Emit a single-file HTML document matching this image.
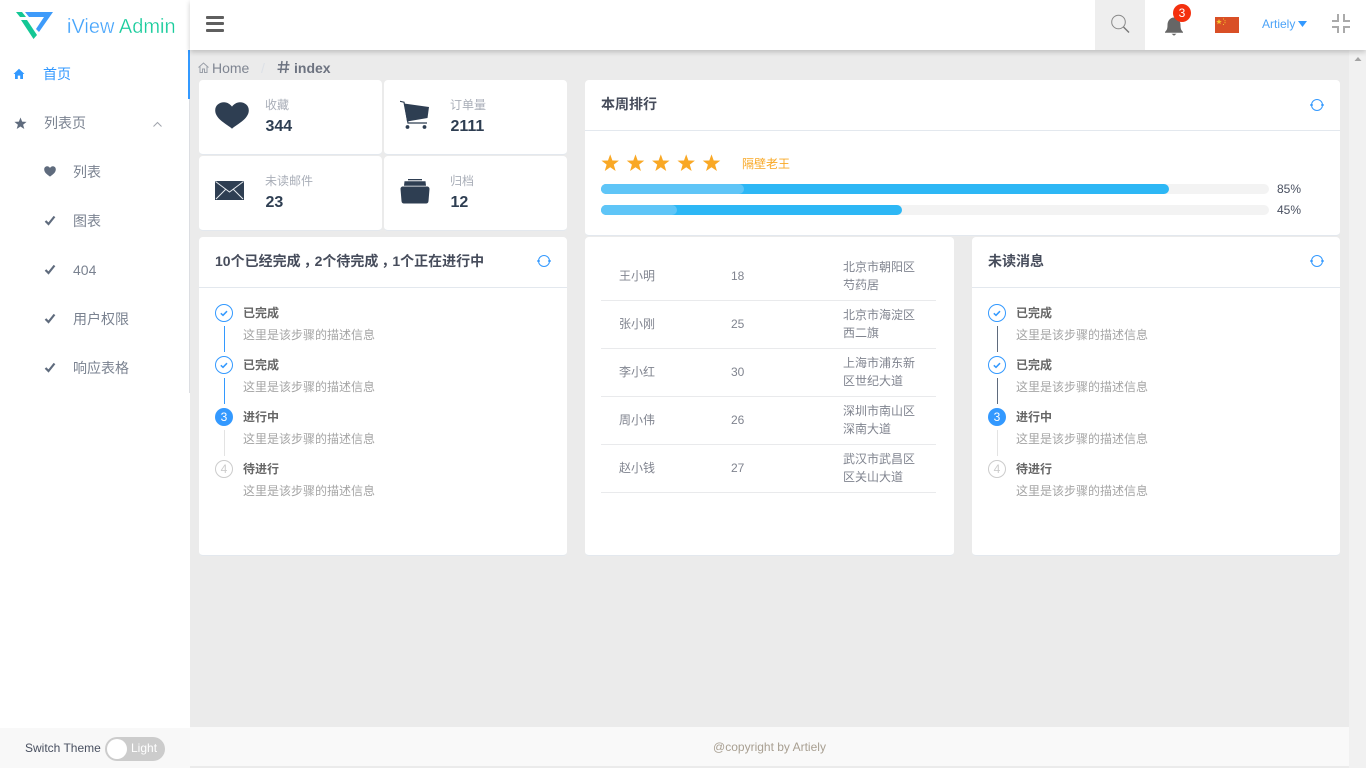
<!DOCTYPE html>
<html><head><meta charset="utf-8">
<style>
*{box-sizing:border-box}
html,body{margin:0;padding:0;width:1366px;height:768px;overflow:hidden;background:#ebebeb;font-family:"Liberation Sans","Noto Sans CJK SC",sans-serif;color:#495060;font-size:12px}
.a{position:absolute}
.t{position:absolute;white-space:nowrap;line-height:18px}
.card{position:absolute;background:#fff;border-radius:4px;border:1px solid #e3e8ee;border-width:0 0 1px 0}
.hr{position:absolute;height:1px;background:#e9eaec}
svg{position:absolute;display:block}
.menu{font-size:14px;color:#7a8290}
.lbl{font-size:12px;color:#a9aeb8}
.num{font-size:16px;font-weight:bold;color:#2e3e52}
.title{font-size:14px;font-weight:bold;color:#464c5b}
.title span{position:relative;left:3px}
.st{font-size:12px;font-weight:bold;color:#666}
.sd{font-size:12px;color:#a5a5a5}
.td{font-size:12px;color:#80848f}
.ad{line-height:18px;white-space:normal;width:80px}
</style></head><body>

<!-- scrollbar -->
<div class="a" style="left:1349px;top:50px;width:17px;height:718px;background:#f1f1f1"></div>
<svg style="left:1354px;top:56px" width="8" height="6"><path d="M4 1 L7.500 5 H.5Z" fill="#a3a3a3"/></svg>

<!-- sidebar -->
<div class="a" style="left:0;top:0;width:190px;height:768px;background:#fff"></div>
<div class="a" style="left:189px;top:50px;width:1px;height:343px;background:#dcdee2"></div>
<div class="a" style="left:188px;top:50px;width:2px;height:49px;background:#3399ff"></div>

<!-- logo -->
<svg style="left:0;top:0" width="60" height="45" viewBox="0 0 60 45">
<path d="M25 12 H53 L39 32 L36 29 L44 17 H29Z" fill="#3e9bfa"/>
<path d="M16 12 H22 L26 17 H20Z" fill="#14c795"/>
<path d="M21 20 H27 L37 35 L33.500 39Z" fill="#14c795"/>
</svg>
<div class="t" style="left:67px;top:15px;font-size:20px;line-height:24px;color:#45a4fb;-webkit-text-stroke:.3px #fff">iView <span style="color:#19cc9c">Admin</span></div>

<!-- menu -->
<svg style="left:13px;top:68px" width="12" height="12" viewBox="0 0 12 12"><path d="M6 .8 L11.500 6 H10 V11 H7.200 V7.600 H4.800 V11 H2 V6 H.5Z" fill="#3399ff"/></svg>
<div class="t" style="left:43px;top:65px;font-size:14px;color:#3399ff">首页</div>

<svg style="left:14px;top:117px" width="13" height="13" viewBox="0 0 12 12"><path d="M6 .5 L7.500 4.300 L11.600 4.500 L8.400 7.100 L9.500 11.100 L6 8.800 L2.500 11.100 L3.600 7.100 L.4 4.500 L4.500 4.300Z" fill="#5f6b7d"/></svg>
<div class="t menu" style="left:44px;top:114px">列表页</div>
<svg style="left:152px;top:121px" width="11" height="7"><path d="M1.500 5.500 L5.500 1.500 L9.500 5.500" fill="none" stroke="#a0a4ad" stroke-width="1"/></svg>

<svg style="left:44px;top:166px" width="12" height="11" viewBox="0 0 12 11"><path d="M6 10.600 C3 8.400 .2 6.600 .2 3.400 C.2 1.400 1.700 .3 3.200 .3 C4.400 .3 5.400 1 6 2 C6.600 1 7.600 .3 8.800 .3 C10.300 .3 11.800 1.400 11.800 3.400 C11.800 6.600 9 8.400 6 10.600Z" fill="#5f6b7d"/></svg>
<div class="t menu" style="left:73px;top:163px">列表</div>
<svg style="left:44px;top:215px" width="12" height="11"><path d="M1.500 6 L4.500 9 L10.500 1.500" fill="none" stroke="#5f6b7d" stroke-width="2.200"/></svg>
<div class="t menu" style="left:73px;top:212px">图表</div>
<svg style="left:44px;top:264px" width="12" height="11"><path d="M1.500 6 L4.500 9 L10.500 1.500" fill="none" stroke="#5f6b7d" stroke-width="2.200"/></svg>
<div class="t menu" style="left:73px;top:261px">404</div>
<svg style="left:44px;top:313px" width="12" height="11"><path d="M1.500 6 L4.500 9 L10.500 1.500" fill="none" stroke="#5f6b7d" stroke-width="2.200"/></svg>
<div class="t menu" style="left:73px;top:310px">用户权限</div>
<svg style="left:44px;top:362px" width="12" height="11"><path d="M1.500 6 L4.500 9 L10.500 1.500" fill="none" stroke="#5f6b7d" stroke-width="2.200"/></svg>
<div class="t menu" style="left:73px;top:359px">响应表格</div>

<!-- theme switch -->
<div class="a" style="left:0;top:728px;width:190px;height:40px;background:#f8f8f8"></div>
<div class="t" style="left:25px;top:739px;font-size:12px;color:#495060">Switch Theme</div>
<div class="a" style="left:105px;top:737px;width:60px;height:24px;border-radius:12px;background:#ccc"></div>
<div class="a" style="left:107px;top:739px;width:20px;height:20px;border-radius:50%;background:#fff"></div>
<div class="t" style="left:131px;top:739px;font-size:12px;color:#fff">Light</div>

<!-- header -->
<div class="a" style="left:190px;top:0;width:1176px;height:50px;background:#fff;box-shadow:0 2px 5px rgba(0,0,0,.2)"></div>
<div class="a" style="left:206px;top:16px;width:18px;height:3px;border-radius:1px;background:#5f5f5f"></div>
<div class="a" style="left:206px;top:22px;width:18px;height:3px;border-radius:1px;background:#5f5f5f"></div>
<div class="a" style="left:206px;top:29px;width:18px;height:3px;border-radius:1px;background:#5f5f5f"></div>

<div class="a" style="left:1095px;top:0;width:50px;height:50px;background:#eee"></div>
<svg style="left:1110px;top:14px" width="21" height="20" viewBox="0 0 21 20"><circle cx="8.500" cy="8" r="6.800" fill="none" stroke="#888" stroke-width="1"/><path d="M13.500 13 L19 18.500" stroke="#777" stroke-width="1.400"/></svg>

<svg style="left:1164px;top:16px" width="20" height="20" viewBox="0 0 20 20"><path d="M1 16 C3 14 3.500 12.500 3.500 9 C3.500 5 6 1.500 10 1.500 C14 1.500 16.500 5 16.500 9 C16.500 12.500 17 14 19 16 L19 16.800 H1Z" fill="#666"/><path d="M7.500 17.800 H12.500 L10 19.800Z" fill="#666"/></svg>
<div class="a" style="left:1173px;top:4px;width:18px;height:18px;border-radius:50%;background:#f4300e;color:#fff;font-size:12px;line-height:18px;text-align:center">3</div>

<svg style="left:1215px;top:17px" width="24" height="16" viewBox="0 0 24 16"><rect width="24" height="16" fill="#d94f26"/><path d="M4 2 L4.800 3.900 L6.800 4 L5.200 5.200 L5.800 7.200 L4 6 L2.200 7.200 L2.800 5.200 L1.200 4 L3.200 3.900Z" fill="#f3c52d"/><rect x="8" y="1.500" width="1" height="1" fill="#f3c52d"/><rect x="9.500" y="3.200" width="1" height="1" fill="#f3c52d"/><rect x="9.500" y="5.200" width="1" height="1" fill="#f3c52d"/><rect x="8" y="7" width="1" height="1" fill="#f3c52d"/></svg>

<div class="t" style="left:1262px;top:15px;font-size:12px;color:#4ca3f7">Artiely</div>
<svg style="left:1298px;top:21px" width="9" height="6"><path d="M0 0 H9 L4.500 6Z" fill="#3399ff"/></svg>

<svg style="left:1331px;top:14px" width="20" height="20" viewBox="0 0 20 20" fill="none" stroke="#aaa" stroke-width="2"><path d="M7 0 V7 H1"/><path d="M13 0 V7 H19"/><path d="M7 19 V13 H1"/><path d="M13 19 V13 H19"/></svg>

<!-- breadcrumb -->
<svg style="left:198px;top:62px" width="11" height="11" viewBox="0 0 11 11" fill="none" stroke="#9a9fa8" stroke-width="1"><path d="M.5 5.500 L5.500 1 L10.500 5.500"/><path d="M2 4.500 V10.500 H4.500 V7 H6.500 V10.500 H9 V4.500"/></svg>
<div class="t" style="left:212px;top:59px;font-size:14px;color:#7f8591">Home</div>
<div class="t" style="left:261px;top:59px;font-size:14px;color:#dde1e7">/</div>
<svg style="left:277px;top:60px" width="13" height="14" viewBox="0 0 13 14" stroke="#6d7380" stroke-width="1.500" fill="none"><path d="M5 1 L3.500 13"/><path d="M10 1 L8.500 13"/><path d="M1 4.800 H12.500"/><path d="M.5 9.300 H12"/></svg>
<div class="t" style="left:294px;top:59px;font-size:14px;font-weight:bold;color:#6d7380">index</div>

<!-- stat cards -->
<div class="card" style="left:199px;top:80px;width:183px;height:75px"></div>
<div class="card" style="left:384px;top:80px;width:183px;height:75px"></div>
<div class="card" style="left:199px;top:156px;width:183px;height:75px"></div>
<div class="card" style="left:384px;top:156px;width:183px;height:75px"></div>

<svg style="left:215px;top:102px" width="34" height="27" viewBox="0 0 34 29" preserveAspectRatio="none"><path d="M17 28.700 C14 25 .2 19 .2 9 C.2 3.500 4.500 .3 9 .3 C12.500 .3 15.300 2.500 17 5 C18.700 2.500 21.500 .3 25 .3 C29.500 .3 33.800 3.500 33.800 9 C33.800 19 20 25 17 28.700Z" fill="#2e3e52"/></svg>
<div class="t lbl" style="left:265px;top:96px">收藏</div>
<div class="t num" style="left:265.500px;top:118px">344</div>

<svg style="left:400px;top:100px" width="30" height="30" viewBox="0 0 30 30"><path d="M0 1.300 L4 2.200 L8 23 H27" fill="none" stroke="#2e3e52" stroke-width="1.200"/><path d="M4 3.500 L29 7 L27.500 18 L7 21.500Z" fill="#2e3e52"/><circle cx="7.500" cy="27" r="1.900" fill="#2e3e52"/><circle cx="24.500" cy="27" r="1.900" fill="#2e3e52"/></svg>
<div class="t lbl" style="left:450px;top:96px">订单量</div>
<div class="t num" style="left:450.500px;top:118px">2111</div>

<svg style="left:215px;top:181px" width="29" height="19" viewBox="0 0 29 19"><rect width="29" height="19" fill="#2e3e52"/><path d="M.5 .5 L14.500 11 L28.500 .5 M1 18 L10.500 8.500 M28 18 L18.500 8.500" fill="none" stroke="#e6eaef" stroke-width="1"/></svg>
<div class="t lbl" style="left:265px;top:172px">未读邮件</div>
<div class="t num" style="left:265.500px;top:194px">23</div>

<svg style="left:400px;top:178px" width="30" height="26" viewBox="0 0 30 26" fill="#2e3e52"><rect x="8" y="1" width="14" height="1.300"/><path d="M4.500 3.300 H25.500 L26 7.700 H4Z"/><path d="M3 8.500 H27 C28.500 8.500 29.500 9.500 29.500 11 L28.500 23 C28.400 24.600 27.500 25.500 26 25.500 H4 C2.500 25.500 1.600 24.600 1.500 23 L.5 11 C.5 9.500 1.500 8.500 3 8.500Z"/></svg>
<div class="t lbl" style="left:450px;top:172px">归档</div>
<div class="t num" style="left:450.500px;top:194px">12</div>

<!-- ranking card -->
<div class="card" style="left:585px;top:80px;width:755px;height:156px"></div>
<div class="t title" style="left:601px;top:95px">本周排行</div>
<div class="hr" style="left:585px;top:130px;width:755px;background:#e3e8ee"></div>
<svg style="left:1310px;top:98px" width="14" height="14" viewBox="0 0 14 14" fill="none" stroke="#3399ff"><circle cx="7" cy="7" r="5.500"/><path d="M0 7 H3 M11 7 H14" stroke-width="1.200"/></svg>

<svg style="left:600px;top:152px" width="122" height="20" viewBox="0 0 122 20" fill="#f9a825">
<path transform="translate(1 1.500) scale(.92)" d="M10 1 L12.400 7.600 L19.500 7.800 L13.900 12.100 L15.900 19 L10 15 L4.100 19 L6.100 12.100 L.5 7.800 L7.600 7.600Z"/>
<path transform="translate(26.300 1.500) scale(.92)" d="M10 1 L12.400 7.600 L19.500 7.800 L13.900 12.100 L15.900 19 L10 15 L4.100 19 L6.100 12.100 L.5 7.800 L7.600 7.600Z"/>
<path transform="translate(51.600 1.500) scale(.92)" d="M10 1 L12.400 7.600 L19.500 7.800 L13.900 12.100 L15.900 19 L10 15 L4.100 19 L6.100 12.100 L.5 7.800 L7.600 7.600Z"/>
<path transform="translate(77 1.500) scale(.92)" d="M10 1 L12.400 7.600 L19.500 7.800 L13.900 12.100 L15.900 19 L10 15 L4.100 19 L6.100 12.100 L.5 7.800 L7.600 7.600Z"/>
<path transform="translate(102.300 1.500) scale(.92)" d="M10 1 L12.400 7.600 L19.500 7.800 L13.900 12.100 L15.900 19 L10 15 L4.100 19 L6.100 12.100 L.5 7.800 L7.600 7.600Z"/>
</svg>
<div class="t" style="left:742px;top:155px;font-size:12px;color:#f9a825">隔壁老王</div>

<div class="a" style="left:601px;top:184px;width:668px;height:10px;border-radius:5px;background:#f3f3f3"></div>
<div class="a" style="left:601px;top:184px;width:568px;height:10px;border-radius:5px;background:#2db7f5"></div>
<div class="a" style="left:601px;top:184px;width:143px;height:10px;border-radius:5px;background:#5fc5f7"></div>
<div class="t" style="left:1277px;top:180px;font-size:12px;color:#495060">85%</div>
<div class="a" style="left:601px;top:205px;width:668px;height:10px;border-radius:5px;background:#f3f3f3"></div>
<div class="a" style="left:601px;top:205px;width:301px;height:10px;border-radius:5px;background:#2db7f5"></div>
<div class="a" style="left:601px;top:205px;width:76px;height:10px;border-radius:5px;background:#5fc5f7"></div>
<div class="t" style="left:1277px;top:201px;font-size:12px;color:#495060">45%</div>

<!-- bottom cards -->
<div class="card" style="left:199px;top:237px;width:368px;height:319px"></div>
<div class="card" style="left:585px;top:237px;width:369px;height:319px"></div>
<div class="card" style="left:972px;top:237px;width:368px;height:319px"></div>

<!-- steps 1 -->
<div class="t title" style="left:215px;top:252px">10个已经完成<span>，</span>2个待完成<span>，</span>1个正在进行中</div>
<div class="hr" style="left:199px;top:287px;width:368px;background:#e3e8ee"></div>
<svg style="left:537px;top:254px" width="14" height="14" viewBox="0 0 14 14" fill="none" stroke="#3399ff"><circle cx="7" cy="7" r="5.500"/><path d="M0 7 H3 M11 7 H14" stroke-width="1.200"/></svg>

<svg style="left:215px;top:304px" width="18" height="200" viewBox="0 0 18 200">
<circle cx="9" cy="9" r="8.500" fill="#fff" stroke="#3399ff"/><path d="M5.800 9.300 L8 11.300 L12 7.200" fill="none" stroke="#3399ff" stroke-width="1.500"/>
<rect x="9" y="22" width="1" height="26" fill="#3399ff"/>
<circle cx="9" cy="61" r="8.500" fill="#fff" stroke="#3399ff"/><path d="M5.800 61.300 L8 63.300 L12 59.200" fill="none" stroke="#3399ff" stroke-width="1.500"/>
<rect x="9" y="74" width="1" height="26" fill="#3399ff"/>
<circle cx="9" cy="113" r="9" fill="#3399ff"/>
<rect x="9" y="126" width="1" height="26" fill="#e3e3e3"/>
<circle cx="9" cy="165" r="8.500" fill="#fff" stroke="#ccc"/>
</svg>
<div class="t" style="left:215px;top:408px;width:18px;text-align:center;color:#fff;font-size:12px">3</div>
<div class="t" style="left:215px;top:460px;width:18px;text-align:center;color:#ccc;font-size:12px">4</div>
<div class="t st" style="left:243px;top:304px">已完成</div><div class="t sd" style="left:243px;top:326px">这里是该步骤的描述信息</div>
<div class="t st" style="left:243px;top:356px">已完成</div><div class="t sd" style="left:243px;top:378px">这里是该步骤的描述信息</div>
<div class="t st" style="left:243px;top:408px">进行中</div><div class="t sd" style="left:243px;top:430px">这里是该步骤的描述信息</div>
<div class="t st" style="left:243px;top:460px">待进行</div><div class="t sd" style="left:243px;top:482px">这里是该步骤的描述信息</div>

<!-- table -->
<div class="t td" style="left:619px;top:267px">王小明</div><div class="t td" style="left:731px;top:267px">18</div><div class="t td ad" style="left:843px;top:258px">北京市朝阳区<br>芍药居</div>
<div class="hr" style="left:601px;top:300px;width:335px"></div>
<div class="t td" style="left:619px;top:315px">张小刚</div><div class="t td" style="left:731px;top:315px">25</div><div class="t td ad" style="left:843px;top:306px">北京市海淀区<br>西二旗</div>
<div class="hr" style="left:601px;top:348px;width:335px"></div>
<div class="t td" style="left:619px;top:363px">李小红</div><div class="t td" style="left:731px;top:363px">30</div><div class="t td ad" style="left:843px;top:354px">上海市浦东新<br>区世纪大道</div>
<div class="hr" style="left:601px;top:396px;width:335px"></div>
<div class="t td" style="left:619px;top:411px">周小伟</div><div class="t td" style="left:731px;top:411px">26</div><div class="t td ad" style="left:843px;top:402px">深圳市南山区<br>深南大道</div>
<div class="hr" style="left:601px;top:444px;width:335px"></div>
<div class="t td" style="left:619px;top:459px">赵小钱</div><div class="t td" style="left:731px;top:459px">27</div><div class="t td ad" style="left:843px;top:450px">武汉市武昌区<br>区关山大道</div>
<div class="hr" style="left:601px;top:492px;width:335px"></div>

<!-- steps 2 -->
<div class="t title" style="left:988px;top:252px">未读消息</div>
<div class="hr" style="left:972px;top:287px;width:368px;background:#e3e8ee"></div>
<svg style="left:1310px;top:254px" width="14" height="14" viewBox="0 0 14 14" fill="none" stroke="#3399ff"><circle cx="7" cy="7" r="5.500"/><path d="M0 7 H3 M11 7 H14" stroke-width="1.200"/></svg>

<svg style="left:988px;top:304px" width="18" height="200" viewBox="0 0 18 200">
<circle cx="9" cy="9" r="8.500" fill="#fff" stroke="#3399ff"/><path d="M5.800 9.300 L8 11.300 L12 7.200" fill="none" stroke="#3399ff" stroke-width="1.500"/>
<rect x="9" y="22" width="1" height="26" fill="#5f6b7d"/>
<circle cx="9" cy="61" r="8.500" fill="#fff" stroke="#3399ff"/><path d="M5.800 61.300 L8 63.300 L12 59.200" fill="none" stroke="#3399ff" stroke-width="1.500"/>
<rect x="9" y="74" width="1" height="26" fill="#5f6b7d"/>
<circle cx="9" cy="113" r="9" fill="#3399ff"/>
<rect x="9" y="126" width="1" height="26" fill="#e3e3e3"/>
<circle cx="9" cy="165" r="8.500" fill="#fff" stroke="#ccc"/>
</svg>
<div class="t" style="left:988px;top:408px;width:18px;text-align:center;color:#fff;font-size:12px">3</div>
<div class="t" style="left:988px;top:460px;width:18px;text-align:center;color:#ccc;font-size:12px">4</div>
<div class="t st" style="left:1016px;top:304px">已完成</div><div class="t sd" style="left:1016px;top:326px">这里是该步骤的描述信息</div>
<div class="t st" style="left:1016px;top:356px">已完成</div><div class="t sd" style="left:1016px;top:378px">这里是该步骤的描述信息</div>
<div class="t st" style="left:1016px;top:408px">进行中</div><div class="t sd" style="left:1016px;top:430px">这里是该步骤的描述信息</div>
<div class="t st" style="left:1016px;top:460px">待进行</div><div class="t sd" style="left:1016px;top:482px">这里是该步骤的描述信息</div>

<!-- footer -->
<div class="a" style="left:190px;top:727px;width:1159px;height:39px;background:#f9f9f9"></div>
<div class="t" style="left:190px;top:738px;width:1159px;text-align:center;font-size:12px;color:#a89f91">@copyright by Artiely</div>
</body></html>
